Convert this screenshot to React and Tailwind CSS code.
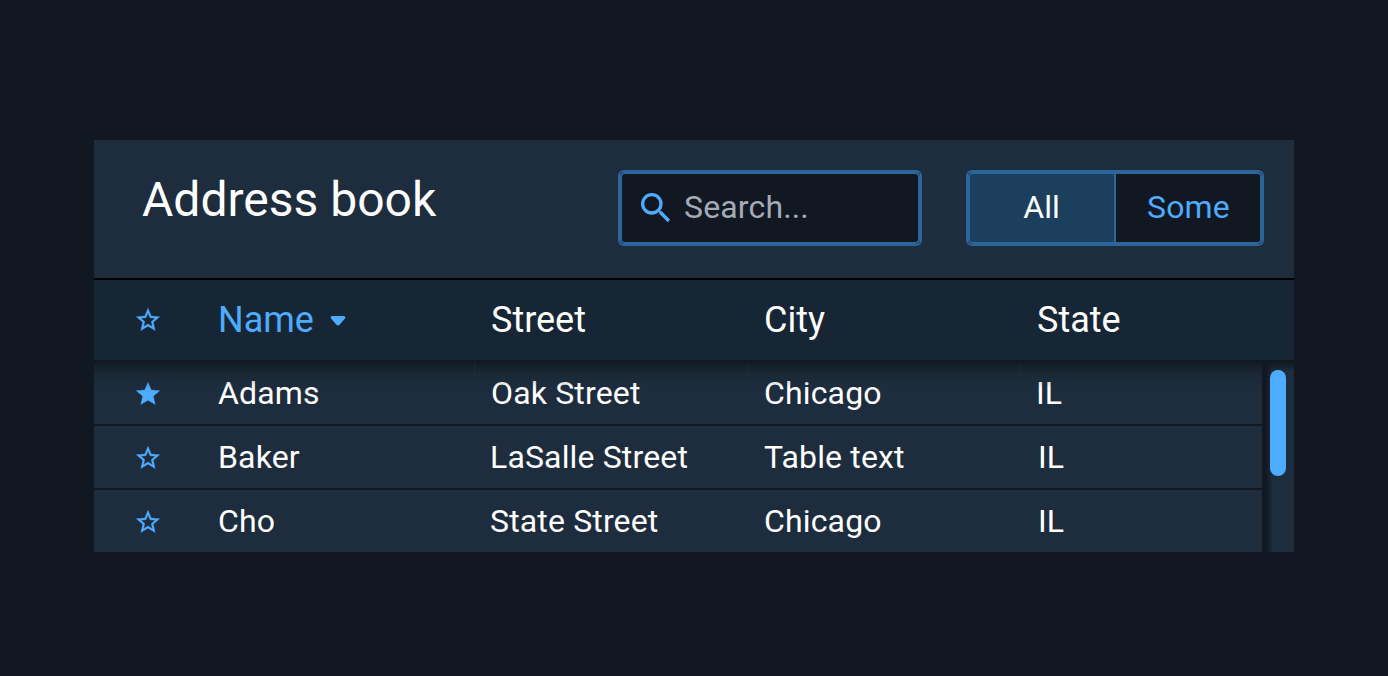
import { MdSearch } from 'react-icons/md';

const STAR_SOLID =
  'M12 17.27 18.18 21l-1.64-7.03L22 9.24l-7.19-.61L12 2 9.19 8.63 2 9.24l5.46 4.73L5.82 21z';
const STAR_HOLE =
  'M12 15.4l-3.76 2.27 1-4.28-3.32-2.88 4.38-.38L12 6.1l1.71 4.04 4.38.38-3.32 2.88 1 4.28L12 15.4z';

function Star({ filled }) {
  return (
    <svg viewBox="0 0 24 24" className="size-7 shrink-0" fill="#4dacff" stroke="#4dacff" strokeWidth="0.3" strokeLinejoin="round">
      <path fillRule="evenodd" d={filled ? STAR_SOLID : STAR_SOLID + STAR_HOLE} />
    </svg>
  );
}

const rows = [
  { filled: true, name: 'Adams', street: 'Oak Street', city: 'Chicago', state: 'IL', streetShift: '', stateShift: '-ml-px' },
  { filled: false, name: 'Baker', street: 'LaSalle Street', city: 'Table text', state: 'IL', streetShift: '-ml-px', stateShift: 'ml-px' },
  { filled: false, name: 'Cho', street: 'State Street', city: 'Chicago', state: 'IL', streetShift: '-ml-px', stateShift: 'ml-px' },
];

function Toolbar() {
  return (
    <header className="flex h-[140px] items-start border-b-2 border-black bg-[#1d2d3e] pl-12 pr-[30px] pt-[30px]">
      <h1 className="flex-1 text-5xl leading-[60px]">Address book</h1>
      <label className="mr-11 flex h-[76px] w-[304px] rounded-md border-2 border-[#2b659b]">
        <span className="flex flex-1 items-center rounded-[5px] border-2 border-[#2b659b] bg-[#111822] pl-3.5">
          <MdSearch className="mb-px size-10 shrink-0 text-[#4dacff]" />
          <span className="mb-0.5 ml-2 text-[32px] leading-10 tracking-[0.15px] text-[#a4abb6]">Search...</span>
        </span>
      </label>
      <div className="flex h-[76px] w-[298px] rounded-md border-2 border-[#2b659b]">
        <div className="grid flex-1 grid-cols-[146px_144px] overflow-hidden rounded-[5px] border-2 border-[#2b659b] text-[32px]">
          <button className="border-r-2 border-[#2b659b] bg-[#1c3f5e] pb-0.5 pr-px">All</button>
          <button className="bg-[#111822] pb-0.5 pl-px tracking-[0.15px] text-[#4dacff]">Some</button>
        </div>
      </div>
    </header>
  );
}

export default function App() {
  return (
    <div className="flex h-[676px] w-[1388px] flex-col items-center bg-[#111822] pt-[140px] font-['Roboto',sans-serif] text-white">
      <main className="w-[1200px]">
        <Toolbar />
        <div className="grid h-20 grid-cols-[124px_273px_273px_273px_1fr] items-center bg-[#172635] text-4xl">
          <div className="pl-10"><Star /></div>
          <div className="flex items-center text-[#4dacff]">
            Name
            <svg viewBox="0 0 16 10" className="ml-4 mt-0.5 h-2.5 w-4" fill="#4dacff">
              <path d="M2.2 0H13.8Q16.2 .3 14.9 2.6L9.6 8.7Q8 10.3 6.4 8.7L1.1 2.6Q-.2 .3 2.2 0Z" />
            </svg>
          </div>
          <div>Street</div>
          <div>City</div>
          <div>State</div>
        </div>
        <div className="relative flex h-48 bg-[#111822] pt-0.5">
          <div className="flex w-[1168px] flex-col gap-0.5">
            {rows.map((r) => (
              <div key={r.name} className="relative grid h-[62px] grid-cols-[124px_273px_273px_273px_1fr] items-center bg-[#1d2d3e] text-[32px] leading-10 tracking-[0.15px]">
                <div className="pl-10 pt-0.5"><Star filled={r.filled} /></div>
                <div>{r.name}</div>
                <div className={r.streetShift}>{r.street}</div>
                <div>{r.city}</div>
                <div className={r.stateShift}>{r.state}</div>
              </div>
            ))}
            <div className="absolute left-0 top-0 grid h-7 w-[1168px] grid-cols-[381px_273px_272px] bg-[linear-gradient(#111822,#111a20aa_7px,#14202655_14px,#18242a00)]">
              <div className="mt-0.5 h-4 border-r border-[#1d3040]/60" />
              <div className="mt-0.5 h-4 border-r border-[#1d3040]/60" />
              <div className="mt-0.5 h-4 border-r border-[#1d3040]/60" />
            </div>
          </div>
          <div className="ml-1 flex-1 bg-[linear-gradient(#111822,#11182200_10px),linear-gradient(to_right,#111822,#1d2d3e_7px)] pl-1 pt-2">
            <div className="h-[106px] w-4 rounded-full bg-[#4dacff]" />
          </div>
        </div>
      </main>
    </div>
  );
}
